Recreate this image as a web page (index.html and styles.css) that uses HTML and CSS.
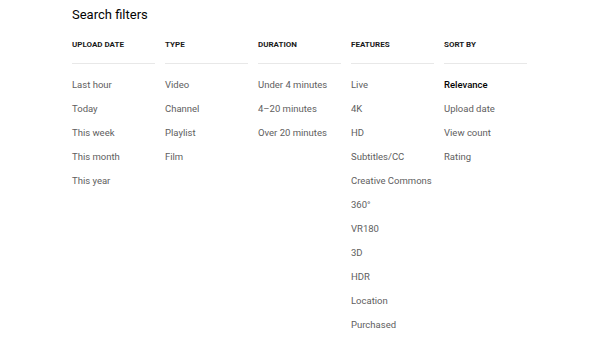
FILE: index.html
```html
<!DOCTYPE html>
<html lang="en">
<head>
    <title>Search filters</title>
    <link rel="stylesheet" href="styles.css">
</head>
<body>
    <div class="filters">
        <h1 class="filters-title">Search filters</h1>

        <div class="filter-columns">
            <div class="filter-group">
                <h4 class="group-head">Upload date</h4>
                <div class="group-item">Last hour</div>
                <div class="group-item">Today</div>
                <div class="group-item">This week</div>
                <div class="group-item">This month</div>
                <div class="group-item">This year</div>
            </div>

            <div class="filter-group">
                <h4 class="group-head">Type</h4>
                <div class="group-item">Video</div>
                <div class="group-item">Channel</div>
                <div class="group-item">Playlist</div>
                <div class="group-item">Film</div>
            </div>

            <div class="filter-group">
                <h4 class="group-head">Duration</h4>
                <div class="group-item">Under 4 minutes</div>
                <div class="group-item">4–20 minutes</div>
                <div class="group-item">Over 20 minutes</div>
            </div>

            <div class="filter-group">
                <h4 class="group-head">Features</h4>
                <div class="group-item">Live</div>
                <div class="group-item">4K</div>
                <div class="group-item">HD</div>
                <div class="group-item">Subtitles/CC</div>
                <div class="group-item">Creative Commons</div>
                <div class="group-item">360°</div>
                <div class="group-item">VR180</div>
                <div class="group-item">3D</div>
                <div class="group-item">HDR</div>
                <div class="group-item">Location</div>
                <div class="group-item">Purchased</div>
            </div>

            <div class="filter-group">
                <h4 class="group-head">Sort by</h4>
                <div class="group-item selected">Relevance</div>
                <div class="group-item">Upload date</div>
                <div class="group-item">View count</div>
                <div class="group-item">Rating</div>
            </div>
        </div>
    </div>
</body>
</html>
```

FILE: styles.css
```css
* {
    margin: 0;
    padding: 0;
    font-family: Roboto, "Liberation Sans", sans-serif;
}

body {
    background: white;
    overflow: hidden;
}

.filters {
    padding-left: 72px;
    padding-top: 6px;
}

.filters-title {
    font-size: 13px;
    font-weight: 400;
    line-height: 18px;
    color: #030303;
}

.filter-columns {
    display: flex;
    gap: 10px;
    margin-top: 15px;
}

.filter-group {
    width: 83px;
}

.group-head {
    font-size: 8px;
    font-weight: 700;
    line-height: 12px;
    text-transform: uppercase;
    color: #1a1a1a;
    padding-bottom: 12px;
    border-bottom: 1px solid #e8e8e8;
    margin-bottom: 9px;
}

.group-item {
    font-size: 9.5px;
    line-height: 24px;
    color: #606060;
    white-space: nowrap;
}

.selected {
    color: #030303;
    font-weight: 500;
}
```
